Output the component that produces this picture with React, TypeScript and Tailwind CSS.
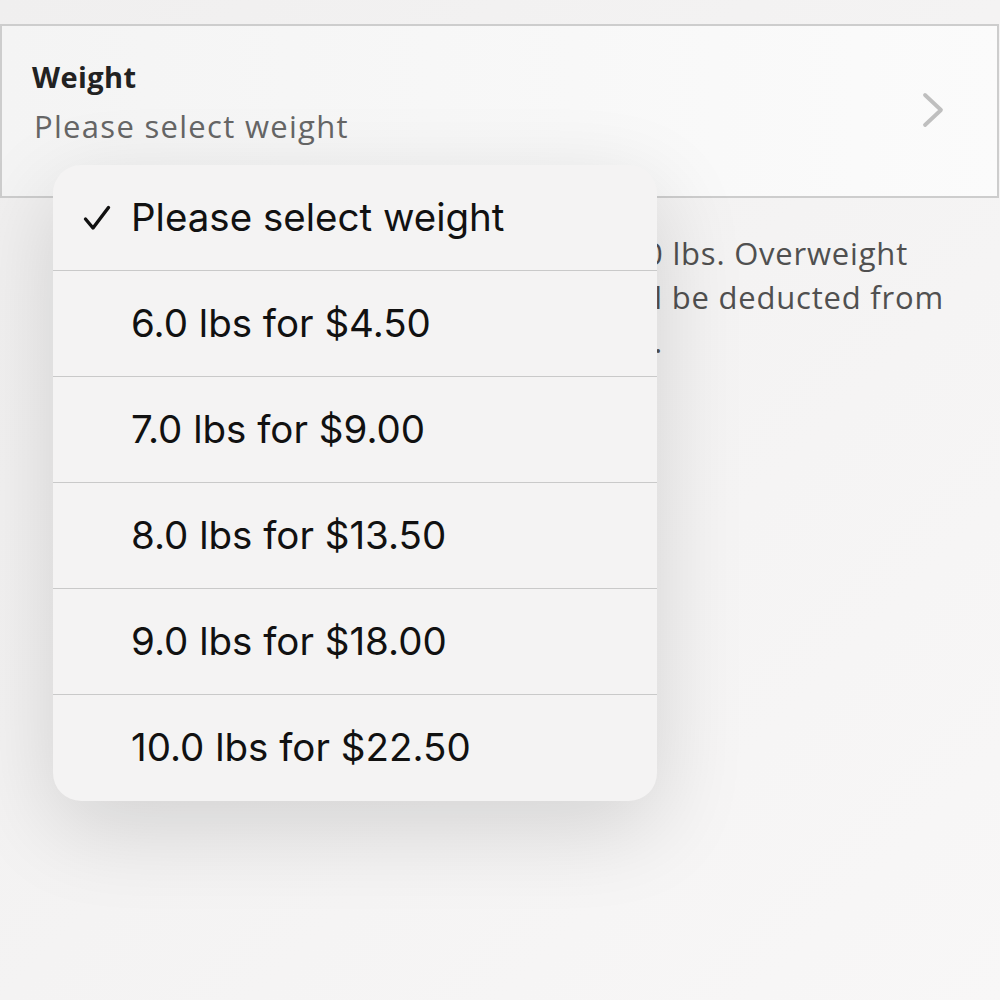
import React from 'react';

const options = [
  '6.0 lbs for $4.50',
  '7.0 lbs for $9.00',
  '8.0 lbs for $13.50',
  '9.0 lbs for $18.00',
  '10.0 lbs for $22.50',
];

export default function App() {
  return (
    <div className="relative w-[1000px] h-[1000px] overflow-hidden bg-gradient-to-br from-[#f0efef] to-[#f8f7f7] font-['Open_Sans',sans-serif]">
      <div className="pt-6">
        {/* Weight field */}
        <div className="mr-[1px] h-[174px] border-2 border-[#cdcdcd] bg-gradient-to-r from-[#f4f4f4] to-[#fbfbfb] flex items-center justify-between pl-[30px] pr-[50px]">
          <div className="flex flex-col -mt-[16px]">
            <span className="text-[29px] font-bold text-[#222] leading-[38px] tracking-[0.4px]">Weight</span>
            <span className="text-[31px] text-[#666] leading-[44px] mt-[8px] ml-[2px] tracking-[1.3px]">Please select weight</span>
          </div>
          <svg width="26" height="36" viewBox="0 0 26 36" fill="none" className="-mt-[2px]">
            <polyline points="4,3 20,18 4,33" stroke="#bfbfbf" strokeWidth="3.8" strokeLinecap="round" strokeLinejoin="round" />
          </svg>
        </div>

        {/* Note text (partly covered by the open menu) */}
        <div className="pl-[32px] pt-[33px] text-[31px] leading-[44px] text-[#505050] whitespace-nowrap tracking-[0.8px]">
          <div className="w-[876px] text-right">Packages may weigh up to 10.0 lbs. Overweight</div>
          <div className="w-[912px] text-right">parcel shipping fees will be deducted from</div>
          <div className="w-[631px] text-right">your account balance.</div>
        </div>
      </div>

      {/* Dropdown menu */}
      <div className="absolute left-[53px] top-[165px] w-[604px] rounded-[28px] bg-[#f4f3f3] shadow-[0_26px_90px_rgba(0,0,0,0.14)] overflow-hidden font-['Inter',sans-serif] text-[#111]">
        <div className="h-[106px] flex items-center border-b border-[#c9c9c9]">
          <div className="w-[78px] flex justify-end pr-[20px]">
            <svg width="28" height="26" viewBox="0 0 28 26" fill="none">
              <polyline points="2.5,14 10,23 25.5,2.5" stroke="#111" strokeWidth="3.4" strokeLinecap="round" strokeLinejoin="round" />
            </svg>
          </div>
          <span className="text-[38.5px]">Please select weight</span>
        </div>
        {options.map((o, i) => (
          <div
            key={o}
            className={`h-[106px] flex items-center pl-[78px] ${i < options.length - 1 ? 'border-b border-[#c9c9c9]' : ''}`}
          >
            <span className="text-[38.5px]">{o}</span>
          </div>
        ))}
      </div>
    </div>
  );
}
